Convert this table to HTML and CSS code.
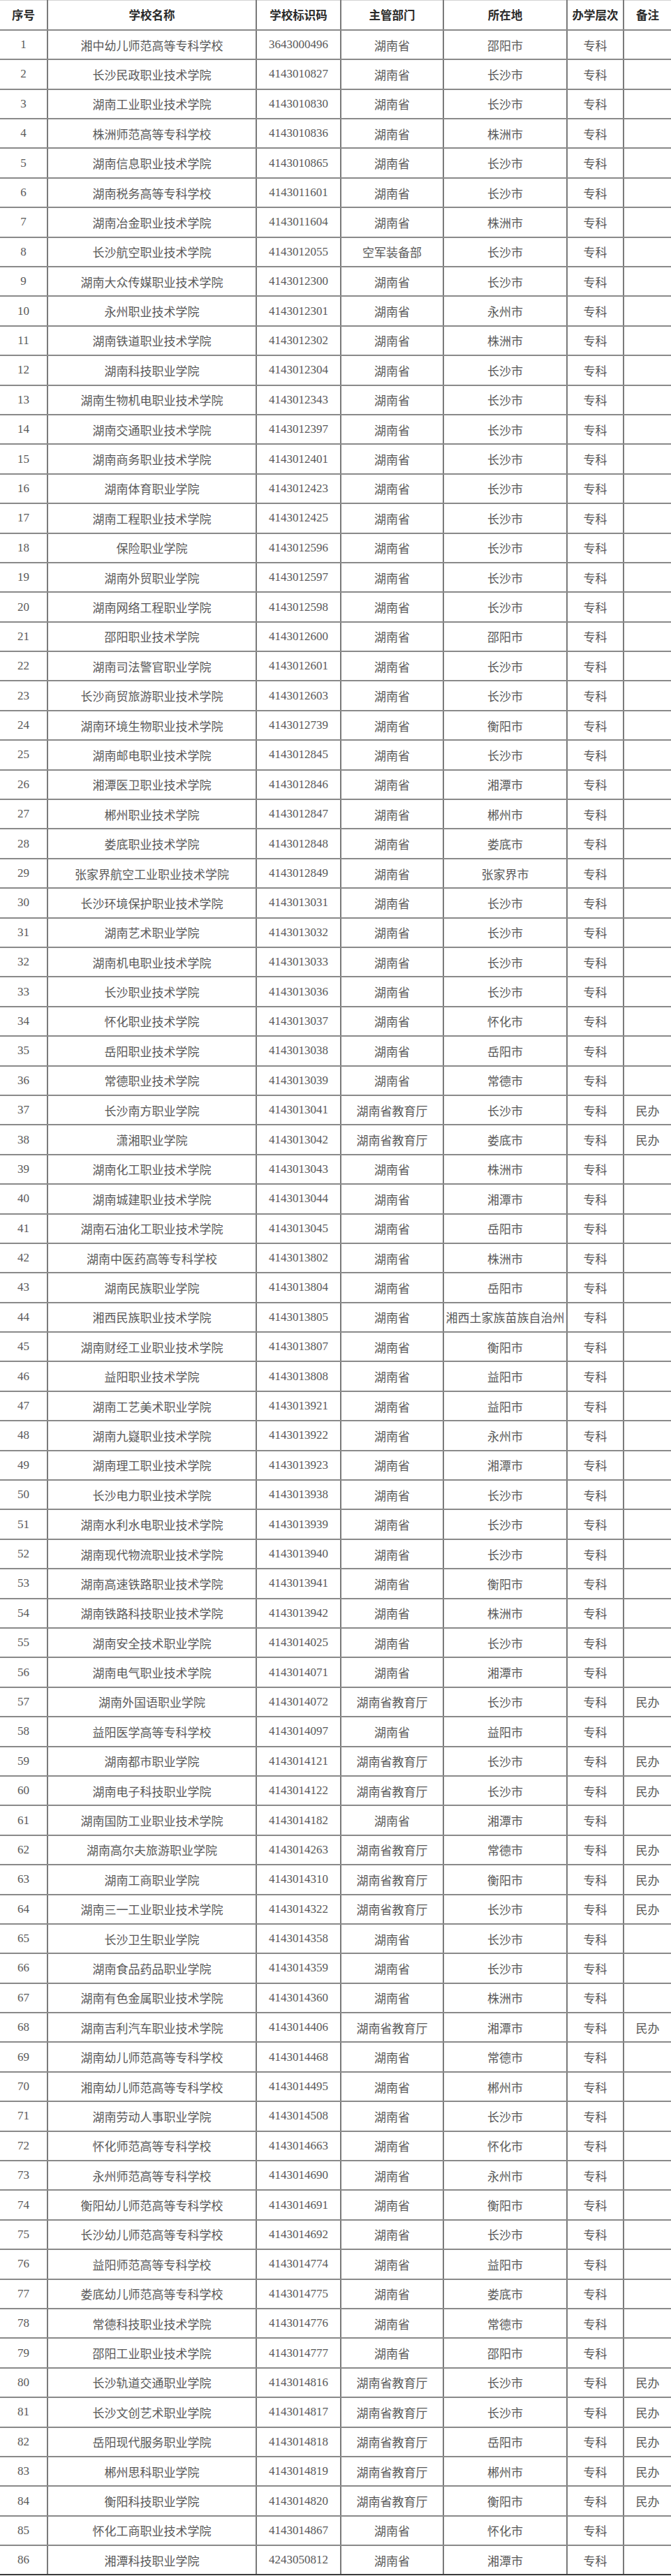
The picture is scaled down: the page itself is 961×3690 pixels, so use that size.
FILE: index.html
```html
<!DOCTYPE html>
<html lang="zh-CN">
<head>
<meta charset="utf-8">
<title>湖南省高职院校名单</title>
<link rel="stylesheet" href="styles.css">
</head>
<body>
<table class="tbl">
<colgroup>
<col class="w-no"><col class="w-name"><col class="w-code"><col class="w-dept"><col class="w-loc"><col class="w-lvl"><col class="w-note">
</colgroup>
<thead>
<tr><th>序号</th><th>学校名称</th><th>学校标识码</th><th>主管部门</th><th>所在地</th><th>办学层次</th><th>备注</th></tr>
</thead>
<tbody>
<tr><td>1</td><td>湘中幼儿师范高等专科学校</td><td>3643000496</td><td>湖南省</td><td>邵阳市</td><td>专科</td><td></td></tr>
<tr><td>2</td><td>长沙民政职业技术学院</td><td>4143010827</td><td>湖南省</td><td>长沙市</td><td>专科</td><td></td></tr>
<tr><td>3</td><td>湖南工业职业技术学院</td><td>4143010830</td><td>湖南省</td><td>长沙市</td><td>专科</td><td></td></tr>
<tr><td>4</td><td>株洲师范高等专科学校</td><td>4143010836</td><td>湖南省</td><td>株洲市</td><td>专科</td><td></td></tr>
<tr><td>5</td><td>湖南信息职业技术学院</td><td>4143010865</td><td>湖南省</td><td>长沙市</td><td>专科</td><td></td></tr>
<tr><td>6</td><td>湖南税务高等专科学校</td><td>4143011601</td><td>湖南省</td><td>长沙市</td><td>专科</td><td></td></tr>
<tr><td>7</td><td>湖南冶金职业技术学院</td><td>4143011604</td><td>湖南省</td><td>株洲市</td><td>专科</td><td></td></tr>
<tr><td>8</td><td>长沙航空职业技术学院</td><td>4143012055</td><td>空军装备部</td><td>长沙市</td><td>专科</td><td></td></tr>
<tr><td>9</td><td>湖南大众传媒职业技术学院</td><td>4143012300</td><td>湖南省</td><td>长沙市</td><td>专科</td><td></td></tr>
<tr><td>10</td><td>永州职业技术学院</td><td>4143012301</td><td>湖南省</td><td>永州市</td><td>专科</td><td></td></tr>
<tr><td>11</td><td>湖南铁道职业技术学院</td><td>4143012302</td><td>湖南省</td><td>株洲市</td><td>专科</td><td></td></tr>
<tr><td>12</td><td>湖南科技职业学院</td><td>4143012304</td><td>湖南省</td><td>长沙市</td><td>专科</td><td></td></tr>
<tr><td>13</td><td>湖南生物机电职业技术学院</td><td>4143012343</td><td>湖南省</td><td>长沙市</td><td>专科</td><td></td></tr>
<tr><td>14</td><td>湖南交通职业技术学院</td><td>4143012397</td><td>湖南省</td><td>长沙市</td><td>专科</td><td></td></tr>
<tr><td>15</td><td>湖南商务职业技术学院</td><td>4143012401</td><td>湖南省</td><td>长沙市</td><td>专科</td><td></td></tr>
<tr><td>16</td><td>湖南体育职业学院</td><td>4143012423</td><td>湖南省</td><td>长沙市</td><td>专科</td><td></td></tr>
<tr><td>17</td><td>湖南工程职业技术学院</td><td>4143012425</td><td>湖南省</td><td>长沙市</td><td>专科</td><td></td></tr>
<tr><td>18</td><td>保险职业学院</td><td>4143012596</td><td>湖南省</td><td>长沙市</td><td>专科</td><td></td></tr>
<tr><td>19</td><td>湖南外贸职业学院</td><td>4143012597</td><td>湖南省</td><td>长沙市</td><td>专科</td><td></td></tr>
<tr><td>20</td><td>湖南网络工程职业学院</td><td>4143012598</td><td>湖南省</td><td>长沙市</td><td>专科</td><td></td></tr>
<tr><td>21</td><td>邵阳职业技术学院</td><td>4143012600</td><td>湖南省</td><td>邵阳市</td><td>专科</td><td></td></tr>
<tr><td>22</td><td>湖南司法警官职业学院</td><td>4143012601</td><td>湖南省</td><td>长沙市</td><td>专科</td><td></td></tr>
<tr><td>23</td><td>长沙商贸旅游职业技术学院</td><td>4143012603</td><td>湖南省</td><td>长沙市</td><td>专科</td><td></td></tr>
<tr><td>24</td><td>湖南环境生物职业技术学院</td><td>4143012739</td><td>湖南省</td><td>衡阳市</td><td>专科</td><td></td></tr>
<tr><td>25</td><td>湖南邮电职业技术学院</td><td>4143012845</td><td>湖南省</td><td>长沙市</td><td>专科</td><td></td></tr>
<tr><td>26</td><td>湘潭医卫职业技术学院</td><td>4143012846</td><td>湖南省</td><td>湘潭市</td><td>专科</td><td></td></tr>
<tr><td>27</td><td>郴州职业技术学院</td><td>4143012847</td><td>湖南省</td><td>郴州市</td><td>专科</td><td></td></tr>
<tr><td>28</td><td>娄底职业技术学院</td><td>4143012848</td><td>湖南省</td><td>娄底市</td><td>专科</td><td></td></tr>
<tr><td>29</td><td>张家界航空工业职业技术学院</td><td>4143012849</td><td>湖南省</td><td>张家界市</td><td>专科</td><td></td></tr>
<tr><td>30</td><td>长沙环境保护职业技术学院</td><td>4143013031</td><td>湖南省</td><td>长沙市</td><td>专科</td><td></td></tr>
<tr><td>31</td><td>湖南艺术职业学院</td><td>4143013032</td><td>湖南省</td><td>长沙市</td><td>专科</td><td></td></tr>
<tr><td>32</td><td>湖南机电职业技术学院</td><td>4143013033</td><td>湖南省</td><td>长沙市</td><td>专科</td><td></td></tr>
<tr><td>33</td><td>长沙职业技术学院</td><td>4143013036</td><td>湖南省</td><td>长沙市</td><td>专科</td><td></td></tr>
<tr><td>34</td><td>怀化职业技术学院</td><td>4143013037</td><td>湖南省</td><td>怀化市</td><td>专科</td><td></td></tr>
<tr><td>35</td><td>岳阳职业技术学院</td><td>4143013038</td><td>湖南省</td><td>岳阳市</td><td>专科</td><td></td></tr>
<tr><td>36</td><td>常德职业技术学院</td><td>4143013039</td><td>湖南省</td><td>常德市</td><td>专科</td><td></td></tr>
<tr><td>37</td><td>长沙南方职业学院</td><td>4143013041</td><td>湖南省教育厅</td><td>长沙市</td><td>专科</td><td>民办</td></tr>
<tr><td>38</td><td>潇湘职业学院</td><td>4143013042</td><td>湖南省教育厅</td><td>娄底市</td><td>专科</td><td>民办</td></tr>
<tr><td>39</td><td>湖南化工职业技术学院</td><td>4143013043</td><td>湖南省</td><td>株洲市</td><td>专科</td><td></td></tr>
<tr><td>40</td><td>湖南城建职业技术学院</td><td>4143013044</td><td>湖南省</td><td>湘潭市</td><td>专科</td><td></td></tr>
<tr><td>41</td><td>湖南石油化工职业技术学院</td><td>4143013045</td><td>湖南省</td><td>岳阳市</td><td>专科</td><td></td></tr>
<tr><td>42</td><td>湖南中医药高等专科学校</td><td>4143013802</td><td>湖南省</td><td>株洲市</td><td>专科</td><td></td></tr>
<tr><td>43</td><td>湖南民族职业学院</td><td>4143013804</td><td>湖南省</td><td>岳阳市</td><td>专科</td><td></td></tr>
<tr><td>44</td><td>湘西民族职业技术学院</td><td>4143013805</td><td>湖南省</td><td>湘西土家族苗族自治州</td><td>专科</td><td></td></tr>
<tr><td>45</td><td>湖南财经工业职业技术学院</td><td>4143013807</td><td>湖南省</td><td>衡阳市</td><td>专科</td><td></td></tr>
<tr><td>46</td><td>益阳职业技术学院</td><td>4143013808</td><td>湖南省</td><td>益阳市</td><td>专科</td><td></td></tr>
<tr><td>47</td><td>湖南工艺美术职业学院</td><td>4143013921</td><td>湖南省</td><td>益阳市</td><td>专科</td><td></td></tr>
<tr><td>48</td><td>湖南九嶷职业技术学院</td><td>4143013922</td><td>湖南省</td><td>永州市</td><td>专科</td><td></td></tr>
<tr><td>49</td><td>湖南理工职业技术学院</td><td>4143013923</td><td>湖南省</td><td>湘潭市</td><td>专科</td><td></td></tr>
<tr><td>50</td><td>长沙电力职业技术学院</td><td>4143013938</td><td>湖南省</td><td>长沙市</td><td>专科</td><td></td></tr>
<tr><td>51</td><td>湖南水利水电职业技术学院</td><td>4143013939</td><td>湖南省</td><td>长沙市</td><td>专科</td><td></td></tr>
<tr><td>52</td><td>湖南现代物流职业技术学院</td><td>4143013940</td><td>湖南省</td><td>长沙市</td><td>专科</td><td></td></tr>
<tr><td>53</td><td>湖南高速铁路职业技术学院</td><td>4143013941</td><td>湖南省</td><td>衡阳市</td><td>专科</td><td></td></tr>
<tr><td>54</td><td>湖南铁路科技职业技术学院</td><td>4143013942</td><td>湖南省</td><td>株洲市</td><td>专科</td><td></td></tr>
<tr><td>55</td><td>湖南安全技术职业学院</td><td>4143014025</td><td>湖南省</td><td>长沙市</td><td>专科</td><td></td></tr>
<tr><td>56</td><td>湖南电气职业技术学院</td><td>4143014071</td><td>湖南省</td><td>湘潭市</td><td>专科</td><td></td></tr>
<tr><td>57</td><td>湖南外国语职业学院</td><td>4143014072</td><td>湖南省教育厅</td><td>长沙市</td><td>专科</td><td>民办</td></tr>
<tr><td>58</td><td>益阳医学高等专科学校</td><td>4143014097</td><td>湖南省</td><td>益阳市</td><td>专科</td><td></td></tr>
<tr><td>59</td><td>湖南都市职业学院</td><td>4143014121</td><td>湖南省教育厅</td><td>长沙市</td><td>专科</td><td>民办</td></tr>
<tr><td>60</td><td>湖南电子科技职业学院</td><td>4143014122</td><td>湖南省教育厅</td><td>长沙市</td><td>专科</td><td>民办</td></tr>
<tr><td>61</td><td>湖南国防工业职业技术学院</td><td>4143014182</td><td>湖南省</td><td>湘潭市</td><td>专科</td><td></td></tr>
<tr><td>62</td><td>湖南高尔夫旅游职业学院</td><td>4143014263</td><td>湖南省教育厅</td><td>常德市</td><td>专科</td><td>民办</td></tr>
<tr><td>63</td><td>湖南工商职业学院</td><td>4143014310</td><td>湖南省教育厅</td><td>衡阳市</td><td>专科</td><td>民办</td></tr>
<tr><td>64</td><td>湖南三一工业职业技术学院</td><td>4143014322</td><td>湖南省教育厅</td><td>长沙市</td><td>专科</td><td>民办</td></tr>
<tr><td>65</td><td>长沙卫生职业学院</td><td>4143014358</td><td>湖南省</td><td>长沙市</td><td>专科</td><td></td></tr>
<tr><td>66</td><td>湖南食品药品职业学院</td><td>4143014359</td><td>湖南省</td><td>长沙市</td><td>专科</td><td></td></tr>
<tr><td>67</td><td>湖南有色金属职业技术学院</td><td>4143014360</td><td>湖南省</td><td>株洲市</td><td>专科</td><td></td></tr>
<tr><td>68</td><td>湖南吉利汽车职业技术学院</td><td>4143014406</td><td>湖南省教育厅</td><td>湘潭市</td><td>专科</td><td>民办</td></tr>
<tr><td>69</td><td>湖南幼儿师范高等专科学校</td><td>4143014468</td><td>湖南省</td><td>常德市</td><td>专科</td><td></td></tr>
<tr><td>70</td><td>湘南幼儿师范高等专科学校</td><td>4143014495</td><td>湖南省</td><td>郴州市</td><td>专科</td><td></td></tr>
<tr><td>71</td><td>湖南劳动人事职业学院</td><td>4143014508</td><td>湖南省</td><td>长沙市</td><td>专科</td><td></td></tr>
<tr><td>72</td><td>怀化师范高等专科学校</td><td>4143014663</td><td>湖南省</td><td>怀化市</td><td>专科</td><td></td></tr>
<tr><td>73</td><td>永州师范高等专科学校</td><td>4143014690</td><td>湖南省</td><td>永州市</td><td>专科</td><td></td></tr>
<tr><td>74</td><td>衡阳幼儿师范高等专科学校</td><td>4143014691</td><td>湖南省</td><td>衡阳市</td><td>专科</td><td></td></tr>
<tr><td>75</td><td>长沙幼儿师范高等专科学校</td><td>4143014692</td><td>湖南省</td><td>长沙市</td><td>专科</td><td></td></tr>
<tr><td>76</td><td>益阳师范高等专科学校</td><td>4143014774</td><td>湖南省</td><td>益阳市</td><td>专科</td><td></td></tr>
<tr><td>77</td><td>娄底幼儿师范高等专科学校</td><td>4143014775</td><td>湖南省</td><td>娄底市</td><td>专科</td><td></td></tr>
<tr><td>78</td><td>常德科技职业技术学院</td><td>4143014776</td><td>湖南省</td><td>常德市</td><td>专科</td><td></td></tr>
<tr><td>79</td><td>邵阳工业职业技术学院</td><td>4143014777</td><td>湖南省</td><td>邵阳市</td><td>专科</td><td></td></tr>
<tr><td>80</td><td>长沙轨道交通职业学院</td><td>4143014816</td><td>湖南省教育厅</td><td>长沙市</td><td>专科</td><td>民办</td></tr>
<tr><td>81</td><td>长沙文创艺术职业学院</td><td>4143014817</td><td>湖南省教育厅</td><td>长沙市</td><td>专科</td><td>民办</td></tr>
<tr><td>82</td><td>岳阳现代服务职业学院</td><td>4143014818</td><td>湖南省教育厅</td><td>岳阳市</td><td>专科</td><td>民办</td></tr>
<tr><td>83</td><td>郴州思科职业学院</td><td>4143014819</td><td>湖南省教育厅</td><td>郴州市</td><td>专科</td><td>民办</td></tr>
<tr><td>84</td><td>衡阳科技职业学院</td><td>4143014820</td><td>湖南省教育厅</td><td>衡阳市</td><td>专科</td><td>民办</td></tr>
<tr><td>85</td><td>怀化工商职业技术学院</td><td>4143014867</td><td>湖南省</td><td>怀化市</td><td>专科</td><td></td></tr>
<tr><td>86</td><td>湘潭科技职业学院</td><td>4243050812</td><td>湖南省</td><td>湘潭市</td><td>专科</td><td></td></tr>
</tbody>
</table>
</body>
</html>
```

FILE: styles.css
```css
html, body {
  margin: 0;
  padding: 0;
  background: #ffffff;
}

.tbl {
  width: 961px;
  table-layout: fixed;
  border-collapse: collapse;
  border-spacing: 0;
  border-top: 1px solid #d4d4d4;
}

.w-no { width: 68px; }
.w-name { width: 299px; }
.w-code { width: 121px; }
.w-dept { width: 147px; }
.w-loc { width: 177px; }
.w-lvl { width: 81px; }
.w-note { width: 68px; }

.tbl tr {
  height: 42.4px;
}

.tbl th,
.tbl td {
  padding: 0;
  text-align: center;
  vertical-align: middle;
  white-space: nowrap;
  overflow: hidden;
  border-right: 2px solid #7a7a7a;
  border-bottom: 2px solid #8a8a8a;
}

.tbl th:first-child,
.tbl td:first-child {
  border-left: none;
}

.tbl th:last-child,
.tbl td:last-child {
  border-right: none;
}

.tbl th {
  font-family: "Noto Sans CJK SC", "Liberation Sans", sans-serif;
  font-weight: 700;
  font-size: 16.5px;
  color: #2a2a2a;
  letter-spacing: 0;
}

.tbl td {
  font-family: "Liberation Serif", "Noto Sans CJK SC", serif;
  font-weight: 400;
  font-size: 17px;
  color: #5a5a5a;
}

.tbl tbody tr:last-child td {
  border-bottom: 2px solid #3a3a3a;
}
```
